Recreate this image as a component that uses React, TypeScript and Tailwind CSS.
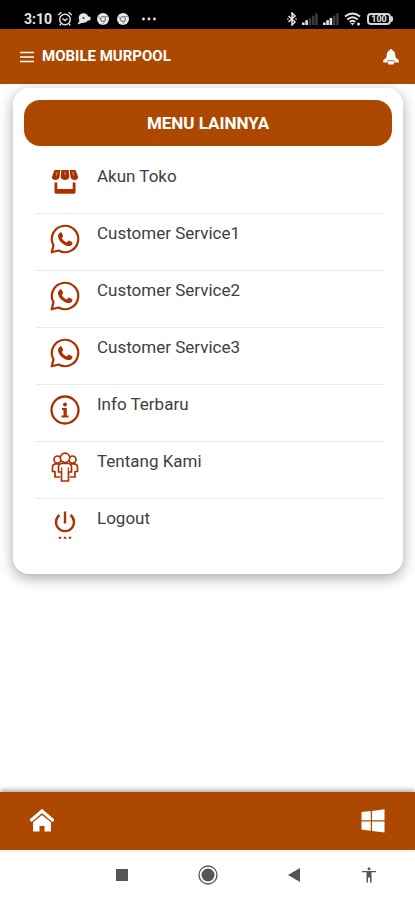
import React from "react";

type IconProps = {
    className?: string
}

type MenuEntry = {
    label: string
    icon: React.ComponentType<IconProps>
}

function StoreIcon({className} : IconProps) {
    return (
        <svg className={className} viewBox="0 0 30 30" fill="currentColor" aria-hidden="true">
            <path d="M4.500 3H10.300L9.500 10C9 14 1.800 14 1.800 10Z" />
            <path d="M11.300 3H18.700L19.300 10C18.800 14 11.200 14 10.700 10Z" />
            <path d="M19.700 3H25.500L28.200 10C28.200 14 21 14 20.500 10Z" />
            <path d="M4.500 15.500H7.300V22H22.700V15.500H25.500V25C25.500 26.200 25 26.700 23.800 26.700H6.200C5 26.700 4.500 26.200 4.500 25Z" />
            <path d="M7.500 5L6.300 8.500M15 5V8M22.500 5L23.700 8.500" stroke="#fff" strokeWidth="1" opacity="0.500" />
        </svg>
    )
}

function WhatsappIcon({className} : IconProps) {
    return (
        <svg className={className} viewBox="0 0 30 30" aria-hidden="true">
            <path d="M1.700 28.300L3.500 21.400A13.200 13.200 0 1 1 8.600 26.500Z" fill="none" stroke="currentColor" strokeWidth="2.200" strokeLinejoin="round" />
            <path d="M10.200 8.400C11 8 11.600 8.200 11.900 8.900L13 11.500C13.200 12 13 12.500 12.600 13L11.800 13.900C13 16 14.500 17.400 16.800 18.400L18.200 16.900C18.500 16.500 18.900 16.500 19.300 16.700L21.900 18C22.500 18.300 22.600 18.700 22.400 19.500C21.700 21.700 19.700 22.500 17.500 21.900C13 20.700 9.500 17.500 8.200 13.400C7.600 11.400 8.400 9.300 10.200 8.400Z" fill="currentColor" />
        </svg>
    )
}

function InfoIcon({className} : IconProps) {
    return (
        <svg className={className} viewBox="0 0 30 30" aria-hidden="true">
            <circle cx="15" cy="15" r="13.500" fill="none" stroke="currentColor" strokeWidth="2.300" />
            <circle cx="15" cy="9.400" r="2" fill="currentColor" />
            <path d="M12 13H16.800V20.500H18.500V22.500H11.500V20.500H13.500V15H12Z" fill="currentColor" />
        </svg>
    )
}

function PeopleIcon({className} : IconProps) {
    return (
        <svg className={className} viewBox="0 0 30 30" fill="none" stroke="currentColor" strokeWidth="1.700" strokeLinejoin="round" aria-hidden="true">
            <circle cx="7.500" cy="7.500" r="3.500" />
            <circle cx="22.500" cy="7.500" r="3.500" />
            <path d="M9 11.800H6C3.500 11.800 2.500 13.500 2.500 15.500V19.500H5V25H10" />
            <path d="M21 11.800H24C26.500 11.800 27.500 13.500 27.500 15.500V19.500H25V25H20" />
            <path d="M12 11.500H18C20.500 11.500 21.500 13 21.500 15V20H18.500V29H11.500V20H8.500V15C8.500 13 9.500 11.500 12 11.500Z" fill="#fff" />
            <path d="M11.700 15.500V20M18.300 15.500V20" strokeWidth="1.200" />
            <circle cx="15" cy="5.800" r="4.700" fill="#fff" />
        </svg>
    )
}

function PowerIcon({className} : IconProps) {
    return (
        <svg className={className} viewBox="0 0 30 30" fill="none" stroke="currentColor" strokeWidth="2.400" aria-hidden="true">
            <path d="M15 2.500V14.500" />
            <path d="M9.500 6A9 9 0 1 0 20.500 6" />
            <path d="M8.800 28.700H11.200M13.800 28.700H16.200M18.800 28.700H21.200" strokeWidth="2" />
        </svg>
    )
}

function BellIcon({className} : IconProps) {
    return (
        <svg className={className} viewBox="0 0 16 16" fill="currentColor" aria-hidden="true">
            <path d="M8 0C8.900 0 9.300 .6 9.300 1.300C11.300 2 12.100 3.700 12.200 5.700C12.300 8.500 13.200 9.400 15 10.600C16.300 11.500 16 13.500 15 13.500H1C0 13.500-.3 11.500 1 10.600C2.800 9.400 3.700 8.500 3.800 5.700C3.900 3.700 4.700 2 6.700 1.300C6.700 .6 7.100 0 8 0Z" />
            <path d="M4.500 12H11.500L10.500 15.500H5.500Z" />
            <path d="M4 12.200Q8 10.700 12 12.200" fill="none" stroke="#ad4800" strokeWidth=".8" />
        </svg>
    )
}

function HomeIcon({className} : IconProps) {
    return (
        <svg className={className} viewBox="0 0 24 24" fill="currentColor" aria-hidden="true">
            <path d="M1.500 11L12 2L22.500 11" fill="none" stroke="currentColor" strokeWidth="3.200" strokeLinecap="round" />
            <path d="M3 13L12 6L21 13V22.500H14.500V17H9.500V22.500H3Z" />
            <path d="M2.500 13L12 5.200L21.500 13" fill="none" stroke="#ad4800" strokeWidth="1" />
        </svg>
    )
}

function WindowsIcon({className} : IconProps) {
    return (
        <svg className={className} viewBox="0 0 24 24" fill="currentColor" aria-hidden="true">
            <path d="M.5 3L9.800 2V11.200H.5ZM11 1.900L23.500 .3V11.200H11ZM.5 12.400H9.800V21.700L.5 20.500ZM11 12.400H23.500V23.600L11 21.900Z" />
        </svg>
    )
}

function AlarmIcon() {
    return (
        <svg className="size-4" viewBox="0 0 16 16" fill="none" stroke="currentColor" strokeWidth="1.400" aria-hidden="true">
            <circle cx="8" cy="8.500" r="5.300" />
            <path d="M1.200 4L4.500 1.300M14.800 4L11.500 1.300M3.800 13L2.800 14.500M12.200 13L13.200 14.500M5.500 7.500L8 9.500L10.500 7.500" />
        </svg>
    )
}

function MessageIcon() {
    return (
        <svg className="h-3 w-3.5" viewBox="0 0 14 12" fill="currentColor" aria-hidden="true">
            <circle cx="6.500" cy="5" r="4.800" />
            <path d="M3.500 6L.3 11.500L6.500 9.500ZM10 3L13.500 4V7L10 8Z" />
            <path d="M5.500 4H7.500V6H5.500Z" fill="#555" />
        </svg>
    )
}

function ChromeIcon() {
    return (
        <svg className="size-3" viewBox="0 0 12 12" aria-hidden="true">
            <circle cx="6" cy="6" r="6" fill="currentColor" />
            <circle cx="6" cy="6" r="2.500" fill="none" stroke="#666" strokeWidth="1" />
            <path d="M6 3.500H11M3.800 7.200L1.500 3.200M8.200 7.200L6 11.500" stroke="#888" strokeWidth=".8" />
        </svg>
    )
}

function BluetoothIcon() {
    return (
        <svg className="h-3.5 w-2.5" viewBox="0 0 10 14" fill="none" stroke="currentColor" strokeWidth="1.500" aria-hidden="true">
            <path d="M1.500 4L8 10L5 13V1L8 4L1.500 10" />
            <path d="M.3 7H1.500M8.500 7H9.700" />
        </svg>
    )
}

function SignalIcon({bars} : {bars: number}) {
    return (
        <svg className="h-3 w-4" viewBox="0 0 16 12" fill="currentColor" aria-hidden="true">
            {[0, 1, 2, 3, 4].map((bar) => (
                <rect key={bar} x={bar * 3.3} y={9.5 - bar * 2.3} width="2.600" height={2.5 + bar * 2.3} opacity={bar < bars ? 1 : 0.25} />
            ))}
        </svg>
    )
}

function WifiIcon() {
    return (
        <svg className="h-3.5 w-[18px]" viewBox="0 0 18 14" fill="none" stroke="currentColor" strokeWidth="1.900" aria-hidden="true">
            <path d="M1 4.500Q8.500-1.500 16 4.500M3.300 7.500Q8.500 3 13.700 7.500M5.700 10Q8.500 7.500 11.300 10" />
            <path d="M6.500 11H10.500L8.500 13.500Z" fill="currentColor" stroke="none" />
            <circle cx="14.500" cy="12" r="1.500" fill="currentColor" stroke="none" />
        </svg>
    )
}

const menuEntries : MenuEntry[] = [
    { label: "Akun Toko", icon: StoreIcon },
    { label: "Customer Service1", icon: WhatsappIcon },
    { label: "Customer Service2", icon: WhatsappIcon },
    { label: "Customer Service3", icon: WhatsappIcon },
    { label: "Info Terbaru", icon: InfoIcon },
    { label: "Tentang Kami", icon: PeopleIcon },
    { label: "Logout", icon: PowerIcon },
]

function StatusBar() {
    return (
        <div className="flex h-[29px] items-center justify-between bg-black pt-2 pr-[22px] pl-6 text-gray-200">
            <div className="flex items-center gap-1">
                <span className="mr-px text-sm font-bold">3:10</span>
                <AlarmIcon />
                <MessageIcon />
                <div className="flex gap-2 pl-0.5">
                    <ChromeIcon />
                    <ChromeIcon />
                </div>
                <svg className="ml-2 h-1 w-4" viewBox="0 0 16 4" fill="currentColor" aria-hidden="true">
                    <circle cx="2.500" cy="2" r="1.400" />
                    <circle cx="8" cy="2" r="1.400" />
                    <circle cx="13.500" cy="2" r="1.400" />
                </svg>
            </div>
            <div className="flex items-center gap-[5px]">
                <BluetoothIcon />
                <SignalIcon bars={2} />
                <SignalIcon bars={3} />
                <WifiIcon />
                <div className="flex items-center">
                    <span className="flex h-3 w-6 items-center justify-center rounded border-2 border-gray-300 text-[9px] leading-[8px] font-bold">100</span>
                    <span className="h-1.5 w-0.5 rounded-r bg-gray-300" />
                </div>
            </div>
        </div>
    )
}

export default function App() {
    return (
        <div className="flex min-h-screen flex-col bg-white font-['Roboto',sans-serif]">
            <StatusBar />

            <header className="flex h-[55px] items-center justify-between bg-[#ad4800] pr-4 pl-5 text-white">
                <div className="flex items-center gap-2">
                    <button type="button" aria-label="Menu">
                        <svg className="h-3 w-3.5" viewBox="0 0 14 12" stroke="currentColor" strokeWidth="1.400" aria-hidden="true">
                            <path d="M0 1.500H14M0 6H14M0 10.500H14" />
                        </svg>
                    </button>
                    <h1 className="text-[15px] font-bold">MOBILE MURPOOL</h1>
                </div>
                <button type="button" aria-label="Notifikasi">
                    <BellIcon className="size-4" />
                </button>
            </header>

            <main className="flex-1 pt-1 pr-3 pl-[13px]">
                <section className="rounded-2xl bg-white px-[11px] pt-3 pb-[19px] shadow-[0_4px_14px_rgba(0,0,0,0.35)]">
                    <h2 className="rounded-2xl bg-[#ad4800] py-[11px] text-center text-[17px] leading-6 font-bold text-white">MENU LAINNYA</h2>
                    <ul className="mt-[11px] pr-2 pl-[11px]">
                        {menuEntries.map(({label, icon: Icon}) => (
                            <li key={label} className="border-b border-[#ebebeb] last:border-b-0">
                                <a href="#" className="flex h-14 items-start pt-2.5 pl-[15px]">
                                    <Icon className="mr-[17px] size-[30px] text-[#ad3000]" />
                                    <span className="text-[17px] leading-[18px] text-neutral-700">{label}</span>
                                </a>
                            </li>
                        ))}
                    </ul>
                </section>
            </main>

            <nav className="flex h-[58px] items-center justify-between bg-[#ad4800] px-[30px] text-white shadow-[0_-2px_5px_rgba(0,0,0,0.35)]">
                <a href="#" aria-label="Beranda">
                    <HomeIcon className="size-6" />
                </a>
                <a href="#" aria-label="Menu lainnya">
                    <WindowsIcon className="size-6" />
                </a>
            </nav>

            <div className="flex h-[50px] items-center justify-between pr-[38px] pl-[115px] text-[#555]">
                <div className="flex items-center gap-[69px]">
                    <button type="button" aria-label="Aplikasi terbaru">
                        <svg className="size-3.5" viewBox="0 0 14 14" fill="currentColor" aria-hidden="true">
                            <path d="M1 1H13V13H1Z" />
                        </svg>
                    </button>
                    <button type="button" aria-label="Layar utama">
                        <svg className="size-5" viewBox="0 0 20 20" aria-hidden="true">
                            <circle cx="10" cy="10" r="9" fill="none" stroke="currentColor" strokeWidth="1.300" />
                            <circle cx="10" cy="10" r="6.500" fill="currentColor" />
                        </svg>
                    </button>
                    <button type="button" aria-label="Kembali">
                        <svg className="size-3.5" viewBox="0 0 14 14" fill="currentColor" aria-hidden="true">
                            <path d="M1 7L13 0V14Z" />
                        </svg>
                    </button>
                </div>
                <button type="button" aria-label="Aksesibilitas">
                    <svg className="size-4" viewBox="0 0 16 16" fill="currentColor" aria-hidden="true">
                        <circle cx="8" cy="1.700" r="1.500" />
                        <path d="M1 4H15V5.300H10.500V15.500H9V10.500H7V15.500H5.500V5.300H1Z" />
                    </svg>
                </button>
            </div>
        </div>
    )
}
